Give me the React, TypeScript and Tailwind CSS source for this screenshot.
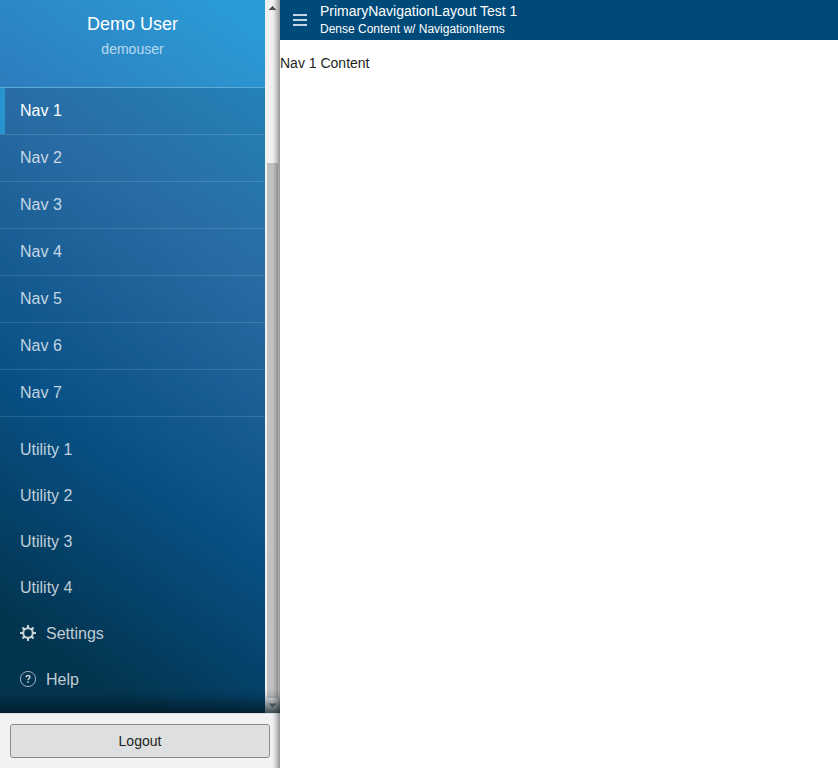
import React from 'react';

const NAV_ITEMS = ['Nav 1', 'Nav 2', 'Nav 3', 'Nav 4', 'Nav 5', 'Nav 6', 'Nav 7'];
const UTILITY_ITEMS = ['Utility 1', 'Utility 2', 'Utility 3', 'Utility 4'];

function SettingsIcon() {
  return (
    <svg width="16" height="16" viewBox="0 0 16 16" fill="none" stroke="currentColor" strokeWidth="2.1" className="mr-2.5 mb-[2px]">
      <circle cx="8" cy="8" r="4.8" />
      <path d="M8 0v3M8 13v3M0 8h3M13 8h3M2.4 2.4l2.2 2.2M11.4 11.4l2.2 2.2M2.4 13.6l2.2-2.2M11.4 4.6l2.2-2.2" />
    </svg>
  );
}

function HelpIcon() {
  return (
    <svg width="16" height="16" viewBox="0 0 16 16" fill="none" stroke="currentColor" className="mr-2.5 mb-[2px]">
      <circle cx="8" cy="8" r="7.6" strokeWidth="0.8" />
      <path d="M6.1 6.3c0-1.1.8-1.7 1.9-1.7s1.9.6 1.9 1.6c0 1.3-1.7 1.3-1.8 2.9" strokeWidth="1.5" />
      <path d="M7.3 11h1.6" strokeWidth="1.5" />
    </svg>
  );
}

function UtilityItem({ label, icon }: { label: string; icon?: React.ReactNode }) {
  return (
    <li className="flex h-[46px] items-center px-5 text-white/75">
      {icon}
      {label}
    </li>
  );
}

function Scrollbar() {
  return (
    <div className="flex w-[15px] shrink-0 flex-col bg-[#f1f1f1]">
      <div className="flex h-4 justify-center">
        <svg width="15" height="16" viewBox="0 0 15 16" shapeRendering="crispEdges">
          <path d="M4 10V9h1V8h1V7h1V6h1v1h1v1h1v1h1v1z" fill="#505050" />
        </svg>
      </div>
      <div className="mt-[147px] ml-[2px] h-[535px] w-[11px] bg-[#c1c1c1]" />
      <svg width="15" height="15" viewBox="0 0 15 15">
        <path d="M3.5 5.5h8l-4 4z" fill="#808488" />
      </svg>
    </div>
  );
}

function Sidebar() {
  return (
    <aside className="relative flex h-full w-[280px] shrink-0 flex-col">
      <div className="relative flex h-[713px] shrink-0">
        <div className="flex w-[265px] flex-col bg-[linear-gradient(35deg,#043c5b_11%,#095c98_38%,#2e79ba_67%,#2a9bd5_96%)]">
          <header className="flex h-[88px] flex-col items-center border-b border-[#5fa9d8] pt-3">
            <div className="text-lg leading-6 text-white">Demo User</div>
            <div className="mt-[3px] text-sm leading-5 text-white/65">demouser</div>
          </header>
          <nav className="flex-1 bg-black/12">
            <ul>
              {NAV_ITEMS.map((label, i) => (
                <li
                  key={label}
                  className={
                    i === 0
                      ? 'flex h-[47px] border-b border-white/13 text-white'
                      : 'flex h-[47px] border-b border-white/13 text-white/75'
                  }
                >
                  <span className={i === 0 ? 'w-[5px] bg-[#2893cf]' : 'w-[5px]'} />
                  <span className="pl-[15px] leading-[46px]">{label}</span>
                </li>
              ))}
            </ul>
            <ul className="pt-[10px]">
              {UTILITY_ITEMS.map((label) => (
                <UtilityItem key={label} label={label} />
              ))}
              <UtilityItem label="Settings" icon={<SettingsIcon />} />
              <UtilityItem label="Help" icon={<HelpIcon />} />
            </ul>
          </nav>
        </div>
        <Scrollbar />
        <div className="absolute inset-x-0 bottom-0 h-6 bg-[linear-gradient(to_top,rgba(0,24,36,0.75),rgba(0,24,36,0.4)_40%,rgba(0,24,36,0.1)_75%,transparent)]" />
      </div>
      <footer className="flex-1 border-t border-[#dedfe0] bg-[#f1f2f4] px-2.5 pt-2.5">
        <button className="block h-[34px] w-full rounded-[3px] border border-[#8a8b8d] bg-[#dedfe0] text-sm text-[#1c1f21]">
          Logout
        </button>
      </footer>
      <div className="absolute inset-y-0 right-0 w-2 bg-[linear-gradient(to_left,rgba(0,0,0,0.38),rgba(0,0,0,0.2)_40%,rgba(0,0,0,0.05)_75%,transparent)]" />
    </aside>
  );
}

export default function App() {
  return (
    <div className="flex h-[768px] w-[838px] overflow-hidden bg-white font-['Liberation_Sans',Arial,sans-serif]">
      <Sidebar />
      <div className="flex flex-1 flex-col">
        <header className="flex h-10 bg-[#004a79] text-white">
          <div className="flex w-10 items-center justify-center">
            <svg width="14" height="12" viewBox="0 0 14 12" shapeRendering="crispEdges" fill="#c5d5e0">
              <path d="M0 0h14v2H0zM0 5h14v2H0zM0 10h14v2H0z" />
            </svg>
          </div>
          <div className="pt-[2px]">
            <div className="text-sm leading-[18px]">PrimaryNavigationLayout Test 1</div>
            <div className="text-xs leading-[18px]">Dense Content w/ NavigationItems</div>
          </div>
        </header>
        <main className="pt-[13px] text-sm leading-5 text-[#1c1f21]">Nav 1 Content</main>
      </div>
    </div>
  );
}
